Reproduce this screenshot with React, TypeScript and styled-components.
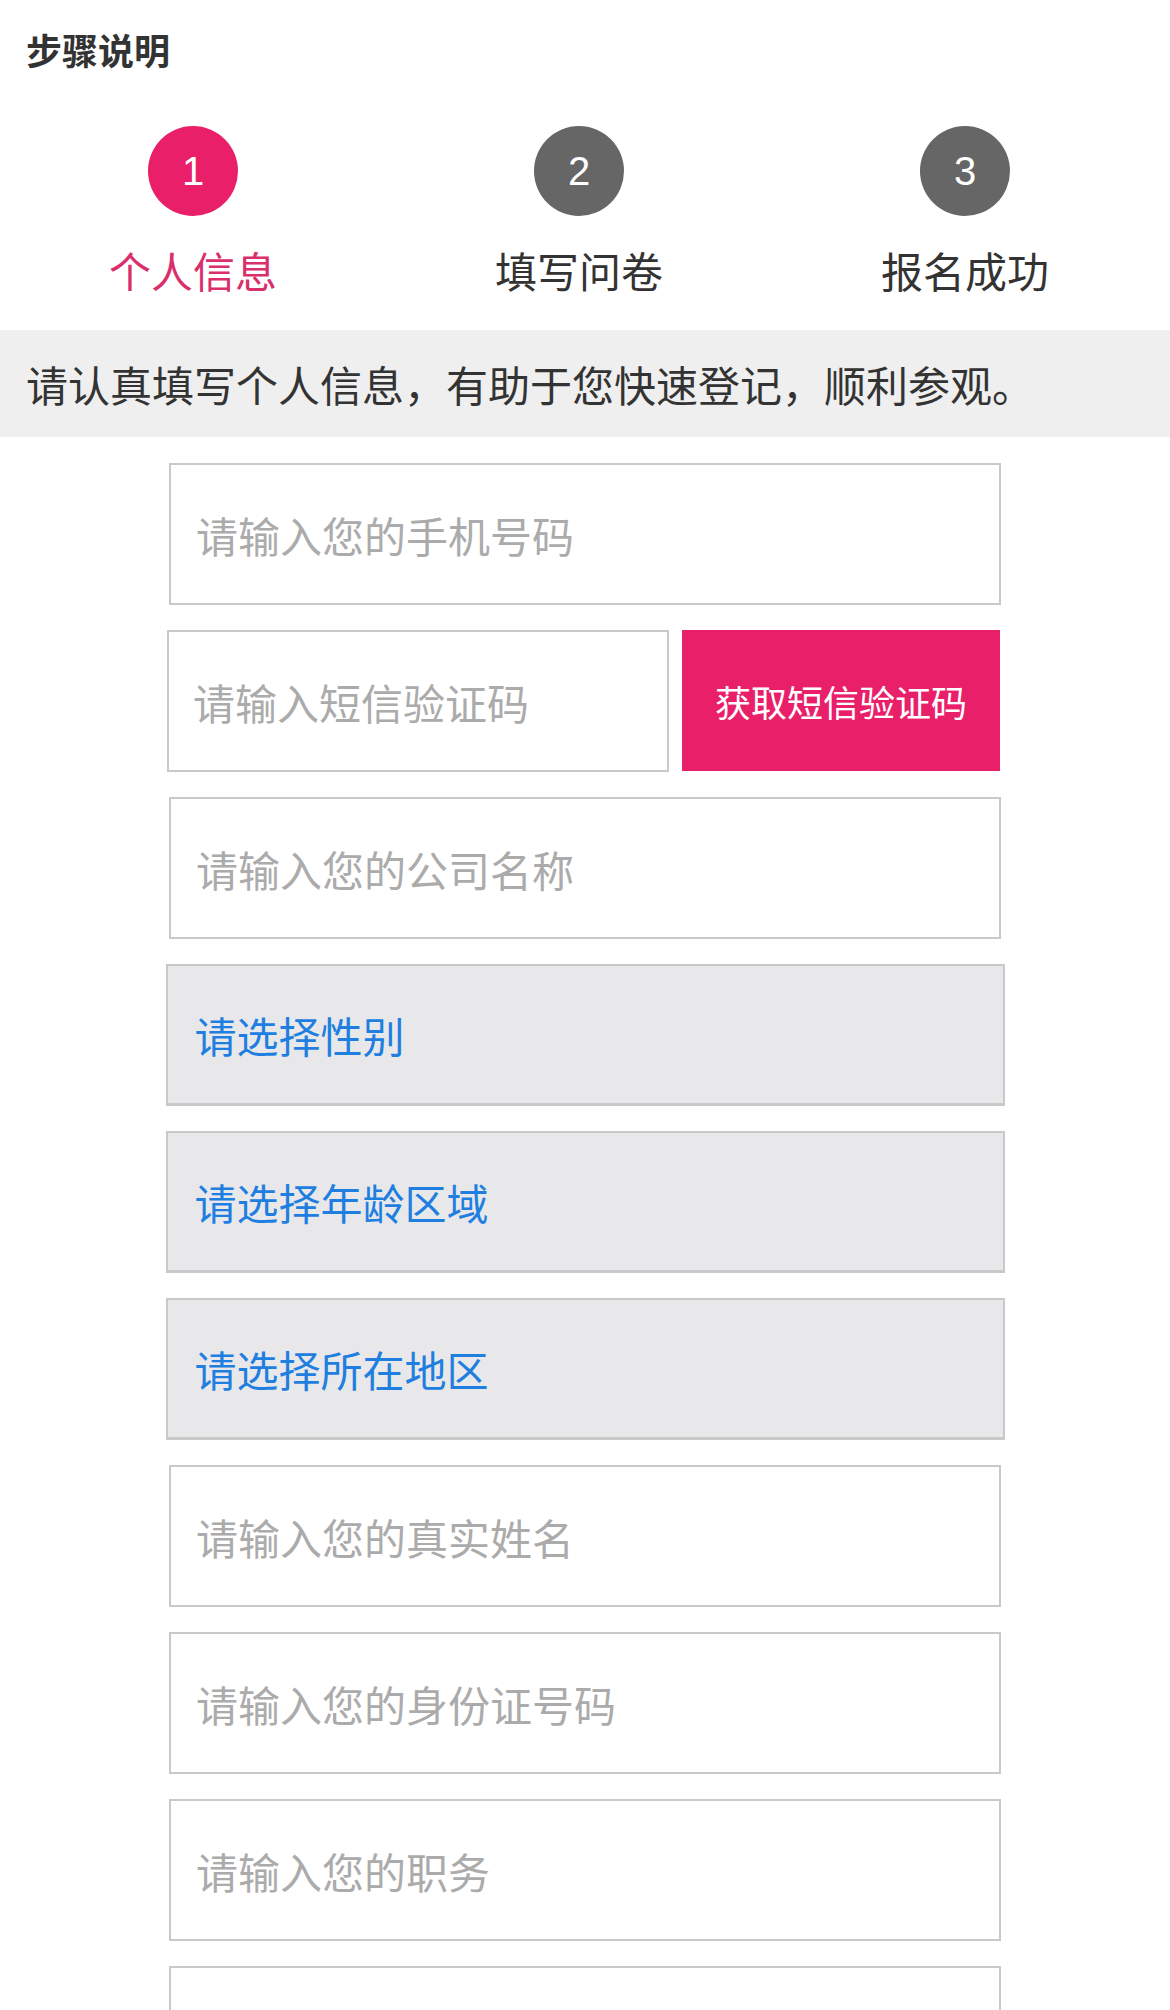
import React from "react";
import styled, { createGlobalStyle } from "styled-components";

const GlobalStyle = createGlobalStyle`
  html, body {
    margin: 0;
    padding: 0;
    background: #ffffff;
  }
  body {
    font-family: "Noto Sans CJK SC", "Noto Sans", sans-serif;
    color: #333333;
  }
  * { box-sizing: border-box; }
`;

const Page = styled.div`
  width: 1170px;
  display: flex;
  flex-direction: column;
`;

const Title = styled.h1`
  margin: 0;
  padding: 24px 0 0 26px;
  font-size: 36px;
  line-height: 50px;
  font-weight: 700;
  color: #333333;
`;

const Steps = styled.div`
  width: 1158px;
  margin-top: 52px;
  display: grid;
  grid-template-columns: repeat(3, 1fr);
`;

const Step = styled.div`
  display: flex;
  flex-direction: column;
  align-items: center;
`;

const Circle = styled.div<{ $active?: boolean }>`
  width: 90px;
  height: 90px;
  border-radius: 50%;
  background: ${(p) => (p.$active ? "#e91f69" : "#666666")};
  color: #ffffff;
  display: flex;
  align-items: center;
  justify-content: center;
  font-family: "Liberation Sans", Arial, sans-serif;
  font-size: 40px;
`;

const StepLabel = styled.div<{ $active?: boolean }>`
  margin-top: 29px;
  font-size: 42px;
  line-height: 50px;
  color: ${(p) => (p.$active ? "#d92f6b" : "#333333")};
`;

const Notice = styled.div`
  margin-top: 35px;
  height: 107px;
  background: #efefef;
  display: flex;
  align-items: center;
  padding-left: 26px;
  font-size: 42px;
  color: #333333;
`;

const Form = styled.form`
  margin: 26px 0 0;
  display: flex;
  flex-direction: column;
  align-items: center;
  gap: 25px;
  padding-bottom: 40px;
`;

const TextInput = styled.input`
  display: block;
  width: 832px;
  height: 142px;
  margin: 0;
  padding: 0 0 0 25px;
  border: 2px solid #c9c9c9;
  border-radius: 0;
  background: #ffffff;
  font-family: "Noto Sans CJK SC", "Noto Sans", sans-serif;
  font-size: 42px;
  color: #333333;
  outline: none;
  &::placeholder {
    color: #ababab;
  }
`;

const CodeRow = styled.div`
  width: 833px;
  margin-left: -3px;
  display: flex;
  gap: 13px;
  align-items: flex-start;
`;

const CodeInput = styled(TextInput)`
  width: 502px;
  padding-left: 24px;
`;

const CodeButton = styled.button`
  width: 318px;
  height: 141px;
  margin: 0;
  border: none;
  border-radius: 0;
  background: #e91f69;
  color: #ffffff;
  font-family: "Noto Sans CJK SC", "Noto Sans", sans-serif;
  font-size: 36px;
  padding: 0;
  cursor: pointer;
`;

const Select = styled.select`
  display: block;
  width: 839px;
  height: 142px;
  margin: 0;
  padding: 0 0 0 27px;
  border: 2px solid #c9c9c9;
  border-bottom-width: 3px;
  border-radius: 0;
  background: #e8e8ea;
  appearance: none;
  -webkit-appearance: none;
  font-family: "Noto Sans CJK SC", "Noto Sans", sans-serif;
  font-size: 42px;
  color: #1f7fe0;
  outline: none;
`;

const steps = ["个人信息", "填写问卷", "报名成功"];

export default function App() {
  return (
    <Page>
      <GlobalStyle />
      <Title>步骤说明</Title>
      <Steps>
        {steps.map((s, i) => (
          <Step key={s}>
            <Circle $active={i === 0}>{i + 1}</Circle>
            <StepLabel $active={i === 0}>{s}</StepLabel>
          </Step>
        ))}
      </Steps>
      <Notice>请认真填写个人信息，有助于您快速登记，顺利参观。</Notice>
      <Form onSubmit={(e) => e.preventDefault()}>
        <TextInput placeholder="请输入您的手机号码" />
        <CodeRow>
          <CodeInput placeholder="请输入短信验证码" />
          <CodeButton type="button">获取短信验证码</CodeButton>
        </CodeRow>
        <TextInput placeholder="请输入您的公司名称" />
        <Select defaultValue="">
          <option value="">请选择性别</option>
          <option value="m">男</option>
          <option value="f">女</option>
        </Select>
        <Select defaultValue="">
          <option value="">请选择年龄区域</option>
        </Select>
        <Select defaultValue="">
          <option value="">请选择所在地区</option>
        </Select>
        <TextInput placeholder="请输入您的真实姓名" />
        <TextInput placeholder="请输入您的身份证号码" />
        <TextInput placeholder="请输入您的职务" />
        <TextInput placeholder="请输入您的邮箱" />
      </Form>
    </Page>
  );
}
